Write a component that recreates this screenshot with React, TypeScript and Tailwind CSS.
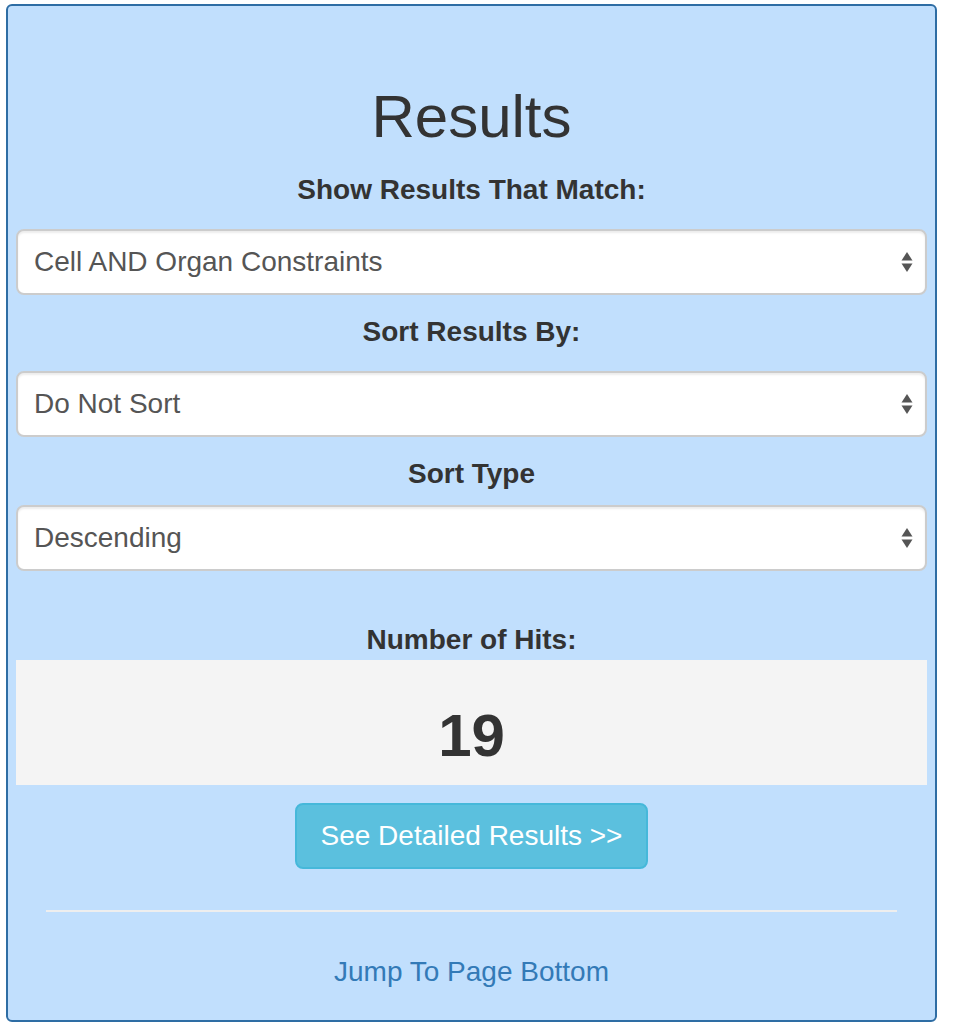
import { useState } from 'react';

type Option = { value: string; label: string };

const matchOptions: Option[] = [
  { value: 'and', label: 'Cell AND Organ Constraints' },
  { value: 'or', label: 'Cell OR Organ Constraints' },
  { value: 'cell', label: 'Cell Constraints Only' },
  { value: 'organ', label: 'Organ Constraints Only' },
];

const sortOptions: Option[] = [
  { value: 'none', label: 'Do Not Sort' },
  { value: 'name', label: 'Name' },
  { value: 'score', label: 'Score' },
];

const orderOptions: Option[] = [
  { value: 'desc', label: 'Descending' },
  { value: 'asc', label: 'Ascending' },
];

function SelectArrows() {
  return (
    <svg
      width="12"
      height="22"
      viewBox="0 0 12 22"
      className="pointer-events-none absolute right-[14px] top-1/2 -translate-y-1/2"
      aria-hidden="true"
    >
      <path d="M6 1 L11.5 9.5 L0.5 9.5 Z" fill="#555555" />
      <path d="M6 21 L11.5 12.5 L0.5 12.5 Z" fill="#555555" />
    </svg>
  );
}

function Picker({
  options,
  value,
  onChange,
}: {
  options: Option[];
  value: string;
  onChange: (v: string) => void;
}) {
  return (
    <div className="relative">
      <select
        value={value}
        onChange={(e) => onChange(e.target.value)}
        className="block h-[66px] w-full appearance-none rounded-[8px] border-2 border-[#cccccc] bg-white pl-[16px] pr-10 text-[28px] text-[#555555] shadow-[inset_0_2px_2px_rgba(0,0,0,0.075)] outline-none"
      >
        {options.map((o) => (
          <option key={o.value} value={o.value}>
            {o.label}
          </option>
        ))}
      </select>
      <SelectArrows />
    </div>
  );
}

export default function App() {
  const [match, setMatch] = useState('and');
  const [sortBy, setSortBy] = useState('none');
  const [order, setOrder] = useState('desc');

  return (
    <div className="min-h-[1032px] w-[954px] bg-white pl-[6px] pt-[4px] font-['Liberation_Sans',Arial,sans-serif] text-[#333333]">
      <div className="w-[931px] rounded-[6px] border-2 border-[#2e6da4] bg-[#c1dffd] px-[8px] pb-[28px] pt-[78px]">
        <h2 className="text-center text-[60px] leading-[66px]">Results</h2>

        <p className="mt-[20px] text-center text-[28px] font-bold leading-[40px]">Show Results That Match:</p>
        <div className="mt-[19px]">
          <Picker options={matchOptions} value={match} onChange={setMatch} />
        </div>

        <p className="mt-[17px] text-center text-[28px] font-bold leading-[40px]">Sort Results By:</p>
        <div className="mt-[19px]">
          <Picker options={sortOptions} value={sortBy} onChange={setSortBy} />
        </div>

        <p className="mt-[17px] text-center text-[28px] font-bold leading-[40px]">Sort Type</p>
        <div className="mt-[11px]">
          <Picker options={orderOptions} value={order} onChange={setOrder} />
        </div>

        <p className="mt-[49px] text-center text-[28px] font-bold leading-[40px]">Number of Hits:</p>
        <div className="bg-[#f4f4f4] pb-[16px] pt-[43px]">
          <p className="text-center text-[60px] font-bold leading-[66px]">19</p>
        </div>

        <div className="mt-[18px] flex justify-center">
          <button
            type="button"
            className="h-[66px] rounded-[8px] border-2 border-[#46b8da] bg-[#5bc0de] px-[24px] text-[28px] text-white"
          >
            See Detailed Results &gt;&gt;
          </button>
        </div>

        <div className="mx-[30px] mt-[41px] border-t-2 border-[#eeeeee]" />

        <div className="mt-[40px] text-center text-[28px] leading-[40px]">
          <a href="#bottom" className="text-[#337ab7]">
            Jump To Page Bottom
          </a>
        </div>
      </div>
    </div>
  );
}
